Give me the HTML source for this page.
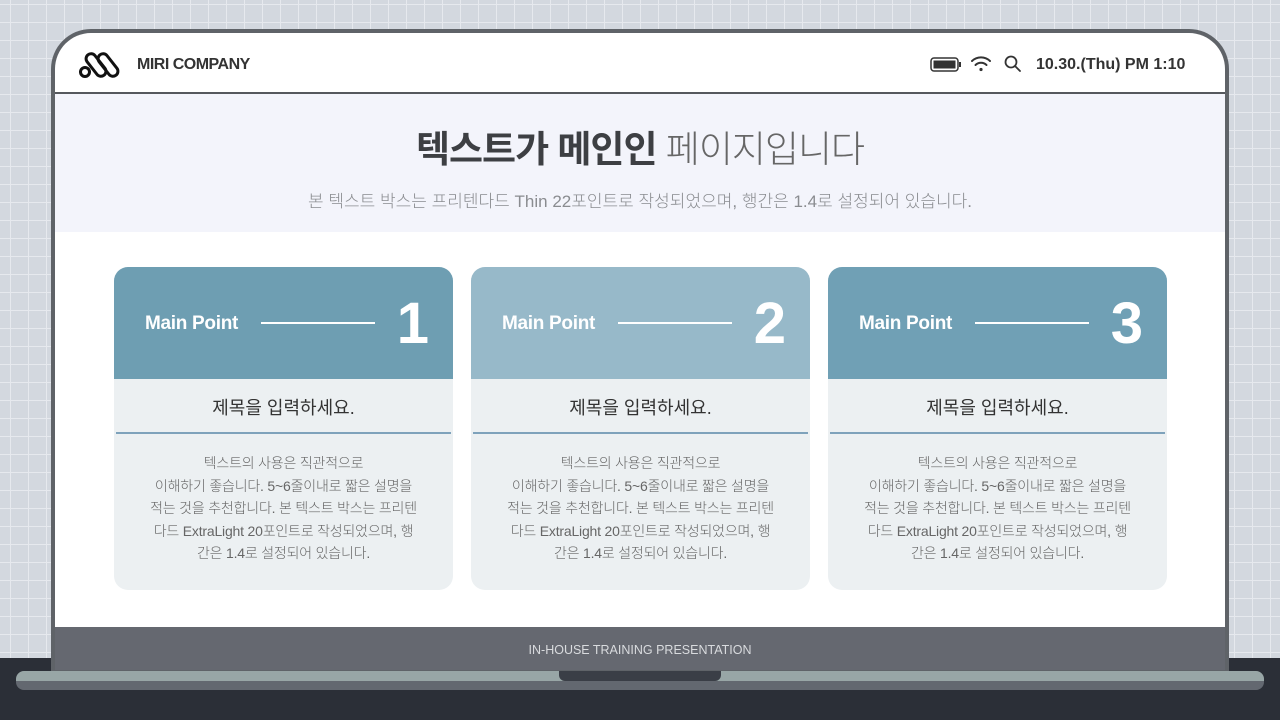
<!DOCTYPE html>
<html><head><meta charset="utf-8"><style>
*{margin:0;padding:0;box-sizing:border-box}
body{width:1280px;height:720px;overflow:hidden;position:relative;font-family:"Liberation Sans","Noto Sans CJK KR",sans-serif;
background-color:#d3d8df;
background-image:linear-gradient(#e6e9ee 1px,transparent 1px),linear-gradient(90deg,#e6e9ee 1px,transparent 1px);background-size:18px 18px;background-position:10px 4px}
.base{position:absolute;left:0;top:658px;width:1280px;height:62px;background:#2b2f37}
.frame{position:absolute;left:51px;top:29px;width:1178px;height:642px;background:#5f6368;border-radius:40px 40px 0 0}
.screen{position:absolute;left:55px;top:33px;width:1170px;height:594px;background:#fff;border-radius:36px 36px 0 0;overflow:hidden}
.hdr{height:61px;border-bottom:2px solid #55585d;position:relative}
.band{height:138px;background:#f3f4fb;text-align:center}
.band h1{padding-top:34px;font-size:37px;color:#3d3f43;font-weight:700;letter-spacing:-1px;line-height:44px}
.band h1 span{font-weight:300;color:#666}
.band p{margin-top:15px;font-size:17px;color:#8a8c90;font-weight:300;letter-spacing:0px}
.bar{position:absolute;left:55px;top:627px;width:1170px;background:#656870;color:#d9dbde;font-size:12.5px;text-align:center;line-height:46px;height:43px}
.sb{position:absolute;left:16px;top:671px;width:1248px;height:19px;border-radius:8px;background:linear-gradient(#98a6a6 0,#98a6a6 52%,#636870 52%)}
.notch{position:absolute;left:559px;top:671px;width:162px;height:10px;background:#3a3e46;border-radius:0 0 6px 6px}
.card{position:absolute;top:267px;width:339px;height:323px;border-radius:14px;background:#ecf0f2;overflow:hidden}
.ch{height:112px;background:#6e9eb2;position:relative;color:#fff}
.ch b{position:absolute;left:31px;top:46px;font-size:19px;font-weight:700;letter-spacing:-0.3px}
.ch i{position:absolute;left:147px;top:55px;width:114px;height:1.5px;background:#fff}
.ch em{position:absolute;right:24px;top:23px;font-style:normal;font-size:58px;font-weight:700}
.ct{height:55px;border-bottom:2px solid #7ea2bb;margin:0 2px;text-align:center;font-size:18px;color:#333;line-height:58px}
.cb{text-align:center;font-size:14px;color:#666;line-height:22.5px;padding-top:18px;font-weight:300;letter-spacing:-0.2px}
</style></head><body>
<div class="base"></div>
<div class="frame"></div>
<div class="screen">
 <div class="hdr">
  <svg style="position:absolute;left:24px;top:17px" width="44" height="30" viewBox="0 0 44 30" fill="none" stroke="#111" stroke-width="3">
   <circle cx="6" cy="22" r="4.5"/>
   <rect x="12" y="2" width="10" height="26" rx="5" transform="rotate(-38 17 15)"/>
   <rect x="24" y="2" width="10" height="26" rx="5" transform="rotate(-38 29 15)"/>
  </svg>
  <div style="position:absolute;left:82px;top:23px;font-size:16px;font-weight:700;color:#333;letter-spacing:-0.5px">MIRI COMPANY</div>
  <svg style="position:absolute;left:875px;top:24px" width="32" height="15" viewBox="0 0 32 15"><rect x="1" y="1" width="27" height="13" rx="3" fill="none" stroke="#333" stroke-width="1.5"/><rect x="3.5" y="3.5" width="22" height="8" fill="#333"/><rect x="29" y="5" width="2" height="5" fill="#333"/></svg>
  <svg style="position:absolute;left:915px;top:22px" width="22" height="18" viewBox="0 0 22 18" fill="none" stroke="#333" stroke-width="2" stroke-linecap="round"><path d="M2 6 A13 13 0 0 1 20 6"/><path d="M5.5 10 A8 8 0 0 1 16.5 10"/><circle cx="11" cy="14.5" r="1.6" fill="#333" stroke="none"/></svg>
  <svg style="position:absolute;left:949px;top:22px" width="18" height="18" viewBox="0 0 18 18" fill="none" stroke="#333" stroke-width="1.8"><circle cx="7" cy="7" r="5.5"/><path d="M11 11 L16 16" stroke-linecap="round"/></svg>
  <div style="position:absolute;left:981px;top:23px;font-size:16px;font-weight:700;color:#333">10.30.(Thu) PM 1:10</div>
 </div>
 <div class="band"><h1>텍스트가 메인인 <span>페이지입니다</span></h1><p>본 텍스트 박스는 프리텐다드 Thin 22포인트로 작성되었으며, 행간은 1.4로 설정되어 있습니다.</p></div>
</div>
<div class="card" style="left:114px"><div class="ch"><b>Main Point</b><i></i><em>1</em></div><div class="ct">제목을 입력하세요.</div><div class="cb">텍스트의 사용은 직관적으로<br>이해하기 좋습니다. 5~6줄이내로 짧은 설명을<br>적는 것을 추천합니다. 본 텍스트 박스는 프리텐<br>다드 ExtraLight 20포인트로 작성되었으며, 행<br>간은 1.4로 설정되어 있습니다.</div></div>
<div class="card" style="left:471px"><div class="ch" style="background:#97b9c9"><b>Main Point</b><i></i><em>2</em></div><div class="ct">제목을 입력하세요.</div><div class="cb">텍스트의 사용은 직관적으로<br>이해하기 좋습니다. 5~6줄이내로 짧은 설명을<br>적는 것을 추천합니다. 본 텍스트 박스는 프리텐<br>다드 ExtraLight 20포인트로 작성되었으며, 행<br>간은 1.4로 설정되어 있습니다.</div></div>
<div class="card" style="left:828px"><div class="ch" style="background:#70a0b5"><b>Main Point</b><i></i><em>3</em></div><div class="ct">제목을 입력하세요.</div><div class="cb">텍스트의 사용은 직관적으로<br>이해하기 좋습니다. 5~6줄이내로 짧은 설명을<br>적는 것을 추천합니다. 본 텍스트 박스는 프리텐<br>다드 ExtraLight 20포인트로 작성되었으며, 행<br>간은 1.4로 설정되어 있습니다.</div></div>
<div class="bar">IN-HOUSE TRAINING PRESENTATION</div>
<div class="sb"></div><div class="notch"></div>
</body></html>
